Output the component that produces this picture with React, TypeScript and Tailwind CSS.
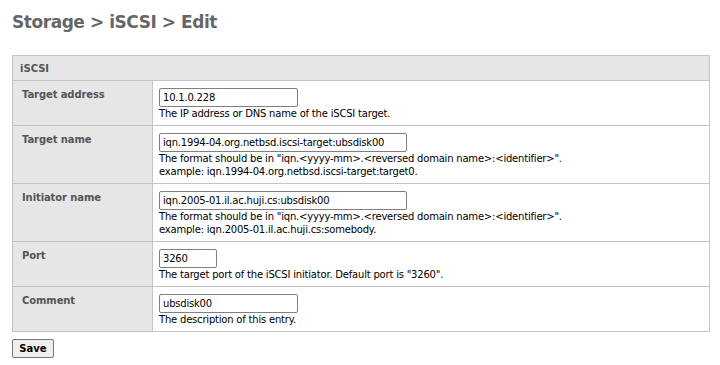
import React from "react";

const font = { fontFamily: '"DejaVu Sans", Verdana, sans-serif' };

function Row({ label, value, inputW, desc }: { label: string; value: string; inputW: string; desc: string[] }) {
  return (
    <tr>
      <td className="w-[140px] border border-[#c4c4c4] bg-[#e6e6e6] align-top pl-[9px] pt-[7px] font-bold text-[#555] text-[10px] leading-[13px] tracking-[-0.1px]">
        {label}
      </td>
      <td className="border border-[#c4c4c4] bg-white align-top pl-[6px] pt-[7px] pb-[5px] text-[10px] leading-[13px] text-black tracking-[-0.2px]">
        <input
          readOnly
          value={value}
          className={`${inputW} block h-[19px] border border-[#808080] rounded-[2px] px-[3px] text-[10px] text-black outline-none tracking-[-0.2px]`}
          style={font}
        />
        {desc.map((d, i) => (
          <div key={i} className="whitespace-pre">{d}</div>
        ))}
      </td>
    </tr>
  );
}

export default function App() {
  return (
    <div className="w-[720px] h-[365px] bg-white px-[12px] pt-[11px]" style={font}>
      <h1 className="text-[17px] leading-[22px] font-bold text-[#666] tracking-[-0.45px]">Storage &gt; iSCSI &gt; Edit</h1>
      <table className="mt-[22px] w-[698px] border-collapse">
        <tbody>
          <tr>
            <td colSpan={2} className="border border-[#c4c4c4] bg-[#e6e6e6] h-[25px] pl-[7px] font-bold text-[#555] text-[10px] leading-[13px] align-middle">
              iSCSI
            </td>
          </tr>
          <Row label="Target address" value="10.1.0.228" inputW="w-[139px]" desc={["The IP address or DNS name of the iSCSI target."]} />
          <Row
            label="Target name"
            value="iqn.1994-04.org.netbsd.iscsi-target:ubsdisk00"
            inputW="w-[248px]"
            desc={['The format should be in "iqn.<yyyy-mm>.<reversed domain name>:<identifier>".', "example: iqn.1994-04.org.netbsd.iscsi-target:target0."]}
          />
          <Row
            label="Initiator name"
            value="iqn.2005-01.il.ac.huji.cs:ubsdisk00"
            inputW="w-[248px]"
            desc={['The format should be in "iqn.<yyyy-mm>.<reversed domain name>:<identifier>".', "example: iqn.2005-01.il.ac.huji.cs:somebody."]}
          />
          <Row label="Port" value="3260" inputW="w-[58px]" desc={['The target port of the iSCSI initiator. Default port is "3260".']} />
          <Row label="Comment" value="ubsdisk00" inputW="w-[139px]" desc={["The description of this entry."]} />
        </tbody>
      </table>
      <button
        className="mt-[7px] h-[19px] w-[42px] border border-[#767676] rounded-[2px] bg-[#efefef] text-[10px] font-bold text-black"
        style={font}
      >
        Save
      </button>
    </div>
  );
}
